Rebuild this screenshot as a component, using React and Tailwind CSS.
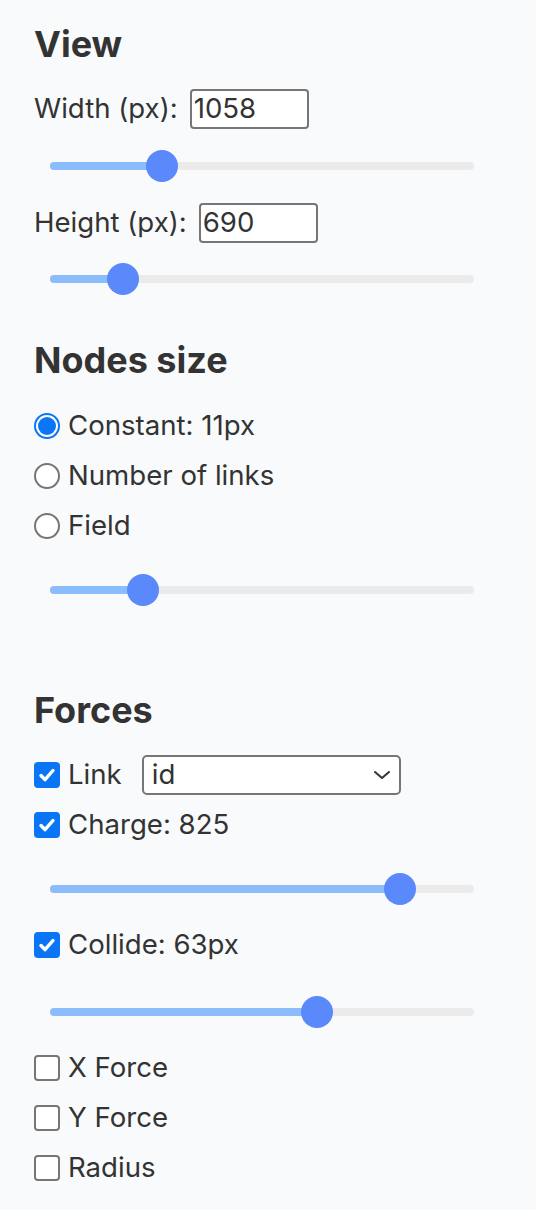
import React from 'react';

const TRACK = 424;

function Slider({ value, className = '' }) {
  const pos = value * TRACK;
  return (
    <div className={`relative h-[32px] w-[424px] ml-[16px] ${className}`}>
      <div className="absolute left-0 right-0 top-[12px] h-[8px] rounded-full bg-[#ebebeb]" />
      <div
        className="absolute left-0 top-[12px] h-[8px] rounded-full bg-[#8bbcfc]"
        style={{ width: pos + 'px' }}
      />
      <div
        className="absolute top-0 h-[32px] w-[32px] rounded-full bg-[#5a89fc]"
        style={{ left: pos - 16 + 'px' }}
      />
    </div>
  );
}

function Check({ checked }) {
  if (checked) {
    return (
      <span className="flex h-[26px] w-[26px] shrink-0 items-center justify-center rounded-[4px] bg-[#0a75f5]">
        <svg width="20" height="20" viewBox="0 0 20 20">
          <path d="M4 10.5l4 4.2L16 5.5" fill="none" stroke="white" strokeWidth="3.4" strokeLinecap="round" strokeLinejoin="round" />
        </svg>
      </span>
    );
  }
  return <span className="h-[26px] w-[26px] shrink-0 rounded-[4px] border-2 border-[#767676] bg-white" />;
}

function Radio({ checked }) {
  if (checked) {
    return (
      <span className="flex h-[26px] w-[26px] shrink-0 items-center justify-center rounded-full border-2 border-[#0a75f5] bg-white">
        <span className="h-[18px] w-[18px] rounded-full bg-[#0a75f5]" />
      </span>
    );
  }
  return <span className="h-[26px] w-[26px] shrink-0 rounded-full border-2 border-[#767676] bg-white" />;
}

function Heading({ children, className = '' }) {
  return <h2 className={`h-[40px] text-[36px] font-bold leading-[40px] ${className}`}>{children}</h2>;
}

function Field({ label, value, className = '' }) {
  return (
    <div className={`flex h-[40px] items-center gap-[12px] ${className}`}>
      <span>{label}</span>
      <div className="flex h-[40px] w-[119px] items-center rounded-[4px] border-2 border-[#767676] bg-white pl-[2px]">
        {value}
      </div>
    </div>
  );
}

export default function App() {
  return (
    <div
      className="min-h-[1210px] bg-[#f9fafb] pl-[34px] pt-[24px] text-[27.6px] leading-none text-[#333333]"
      style={{ fontFamily: 'Inter, "Noto Sans", sans-serif' }}
    >
      <Heading>View</Heading>
      <Field label="Width (px):" value="1058" className="mt-[25px]" />
      <Slider value={0.2645} className="mt-[21px]" />
      <Field label="Height (px):" value="690" className="mt-[21px]" />
      <Slider value={0.1725} className="mt-[20px]" />

      <Heading className="mt-[45px]">Nodes size</Heading>
      <div className="mt-[21px] flex flex-col">
        {[
          ['Constant: 11px', true],
          ['Number of links', false],
          ['Field', false],
        ].map(([label, on]) => (
          <label key={label} className="flex h-[50px] items-center gap-[8px]">
            <Radio checked={on} />
            <span>{label}</span>
          </label>
        ))}
      </div>
      <Slider value={0.22} className="mt-[23px]" />

      <Heading className="mt-[84px]">Forces</Heading>
      <div className="mt-[25px] flex h-[40px] items-center">
        <Check checked />
        <span className="ml-[8px]">Link</span>
        <div className="ml-[20px] flex h-[40px] w-[259px] items-center justify-between rounded-[5px] border-2 border-[#767676] bg-white pl-[8px] pr-[8px]">
          <span>id</span>
          <svg width="18" height="12" viewBox="0 0 18 12">
            <path d="M2 3l7 6 7-6" fill="none" stroke="#333" strokeWidth="2" strokeLinecap="round" strokeLinejoin="round" />
          </svg>
        </div>
      </div>
      <label className="mt-[5px] flex h-[50px] items-center gap-[8px]">
        <Check checked />
        <span>Charge: 825</span>
      </label>
      <Slider value={0.825} className="mt-[23px]" />
      <label className="mt-[15px] flex h-[50px] items-center gap-[8px]">
        <Check checked />
        <span>Collide: 63px</span>
      </label>
      <Slider value={0.63} className="mt-[26px]" />
      <div className="mt-[15px] flex flex-col">
        {['X Force', 'Y Force', 'Radius'].map((label) => (
          <label key={label} className="flex h-[50px] items-center gap-[8px]">
            <Check checked={false} />
            <span>{label}</span>
          </label>
        ))}
      </div>
    </div>
  );
}
